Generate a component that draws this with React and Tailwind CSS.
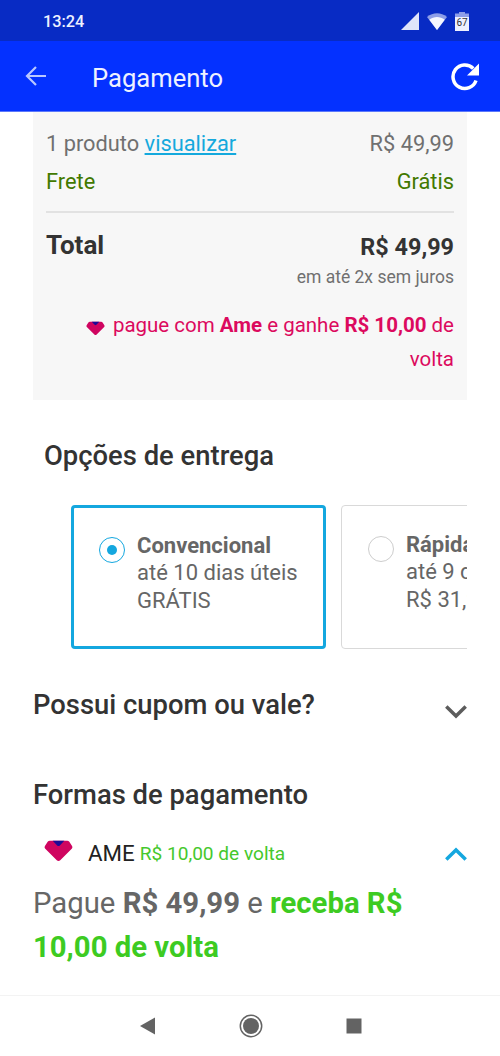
import { useState } from 'react'

const entregas = [
  { nome: "Convencional", prazo: "até 10 dias úteis", preco: "GRÁTIS" },
  { nome: "Rápida", prazo: "até 9 dias úteis", preco: "R$ 31,99" },
];

function AmeLogo({ className }) {
  return (
    <svg viewBox="0 0 30 22" className={className}>
      <path d="M6 0.5h18c1 0 1.600.3 2.200 1l2.800 4.300c.6 1 .5 2-.3 2.800L16.800 20.600c-1.100 1.100-2.500 1.100-3.600 0L1.300 8.600C.5 7.800.4 6.800 1 5.800L3.800 1.500C4.400.8 5 .5 6 .5z" fill="#cf0560" />
      <path d="M9 .5h12l-4.600 4.700c-.9.9-1.900.9-2.800 0z" fill="#1c0a96" />
    </svg>
  );
}

function StatusBar() {
  return (
    <div className="h-[41px] bg-[#082bc4] flex items-center justify-between pl-[43px] pr-[31px] pt-[2px]">
      <span className="text-[#eef1ff] text-[16.3px] font-medium leading-5">13:24</span>
      <div className="flex items-center gap-2">
        <svg viewBox="0 0 18 18" className="w-[18px] h-[18px] mt-[-2px]"><path d="M0 18L18 0v18z" fill="#dfe4fa" /></svg>
        <svg viewBox="0 0 20 17" className="w-5 h-[17px] mt-[-1px]">
          <path d="M0 4C6-1 14-1 20 4L10 17z" fill="#8d9ee8" />
          <path d="M2.300 6.800C7 3.200 13 3.200 17.700 6.800L10 17z" fill="#f5f7ff" />
        </svg>
        <svg viewBox="0 0 14 19" className="w-[14px] h-[19px]">
          <path d="M4 0h6v1.500h4v4H0v-4h4z" fill="#8d9ee8" />
          <path d="M0 5h14v14H0z" fill="#eef1ff" />
          <text x="7" y="13.500" textAnchor="middle" fontSize="10" fill="#333">67</text>
        </svg>
      </div>
    </div>
  );
}

function Header() {
  return (
    <header className="h-[71px] bg-[#0431ff] border-b border-[#5c78fb] flex items-center pl-[25px] pr-[21px]">
      <svg viewBox="0 0 22 20" className="w-[22px] h-5" fill="none" stroke="#b9c7ff" strokeWidth="2.200">
        <path d="M21 10H2.500M11 1L2 10l9 9" />
      </svg>
      <h1 className="ml-[45px] pt-1 flex-1 text-[25.600px] text-[#eef1ff]">Pagamento</h1>
      <svg viewBox="0 0 28 28" className="w-7 h-7 mt-px">
        <path d="M25 17.500A11.800 11.800 0 1 1 22.300 5.500" fill="none" stroke="#fff" strokeWidth="3.500" />
        <path d="M28 .5V12.500H16z" fill="#fff" />
      </svg>
    </header>
  );
}

function Resumo() {
  return (
    <section className="bg-[#f7f7f7] px-[13px] pt-[13px] pb-6 h-[288px]">
      <div className="flex justify-between text-[21.800px] leading-[38px] text-[#707070]">
        <span>1 produto <a className="text-[#15a9dd] underline decoration-2 underline-offset-2">visualizar</a></span>
        <span>R$ 49,99</span>
      </div>
      <div className="flex justify-between text-[21.800px] leading-[38px] text-[#427900]">
        <span>Frete</span>
        <span>Grátis</span>
      </div>
      <div className="mt-[10px] border-t-2 border-[#e2e2e2] pt-[16px] flex justify-between font-bold text-[#333]">
        <span className="text-[26px] leading-8">Total</span>
        <span className="text-[23.400px] leading-9">R$ 49,99</span>
      </div>
      <p className="text-right text-[17.500px] leading-6 text-[#707070]">em até 2x sem juros</p>
      <p className="mt-[19px] text-right text-[20.500px] leading-[34px] text-[#dc0a5e]">
        <AmeLogo className="inline w-[19px] h-[15px] mr-2 mt-1" />
        pague com <b>Ame</b> e ganhe <b>R$ 10,00</b> de volta
      </p>
    </section>
  );
}

function Entrega({ opcao, ativa, onClick }) {
  return (
    <button
      onClick={onClick}
      className={`shrink-0 w-[255px] h-36 flex items-start text-left rounded ${ativa ? "border-3 border-[#14a7df] pl-[25px] pt-6" : "border-[1.5px] border-[#d9d9d9] pl-[26px] pt-[25px]"}`}
    >
      <span className={`mt-[5px] mr-3 size-[26px] shrink-0 rounded-full flex items-center justify-center ${ativa ? "border-[1.5px] border-[#14a7df]" : "border-[1.5px] border-[#cdcdcd]"}`}>
        {ativa && <span className="size-[10px] rounded-full bg-[#14a7df]" />}
      </span>
      <span className="text-[22px] leading-[27.300px] text-[#666] whitespace-nowrap">
        <b className="block">{opcao.nome}</b>
        <span className="block">{opcao.prazo}</span>
        <span className="block">{opcao.preco}</span>
      </span>
    </button>
  );
}

export default function App() {
  const [entrega, setEntrega] = useState(0);
  const [ameAberto, setAmeAberto] = useState(true);

  return (
    <div className="h-[1056px] w-[500px] flex flex-col bg-white font-[Roboto,sans-serif] overflow-hidden">
      <StatusBar />
      <Header />

      <main className="flex-1 px-[33px] overflow-hidden">
        <Resumo />

        <h2 className="mt-[39px] pl-[11px] text-[27.400px] leading-[34px] font-medium text-[#333]">Opções de entrega</h2>
        <div className="mt-8 pl-[38px] flex gap-[15px] overflow-hidden">
          {entregas.map((e, i) => (
            <Entrega key={e.nome} opcao={e} ativa={i === entrega} onClick={() => setEntrega(i)} />
          ))}
        </div>

        <div className="mt-[39px] flex items-center justify-between">
          <h2 className="text-[27.400px] leading-[34px] font-medium text-[#333]">Possui cupom ou vale?</h2>
          <svg viewBox="0 0 22 14" className="w-[22px] h-[14px] mt-[13px]" fill="none" stroke="#5c5c5c" strokeWidth="3.500">
            <path d="M1.300 1.500L11 11l9.700-9.500" />
          </svg>
        </div>

        <h2 className="mt-14 text-[27.400px] leading-[34px] font-medium text-[#333]">Formas de pagamento</h2>
        <div className="mt-6 pl-[11px] h-9 flex items-center" onClick={() => setAmeAberto(!ameAberto)}>
          <AmeLogo className="w-[29px] h-[22px] mb-[7px]" />
          <span className="ml-[15px] text-[22.300px] text-[#222]">AME</span>
          <span className="ml-[5px] flex-1 text-[19.100px] text-[#45c82c]">R$ 10,00 de volta</span>
          <svg viewBox="0 0 22 14" className="w-[22px] h-[14px]" fill="none" stroke="#14a7df" strokeWidth="3.500">
            <path d="M1.300 12.500L11 3l9.700 9.500" />
          </svg>
        </div>
        {ameAberto && (
          <p className="mt-[9px] text-[29.300px] leading-[44px] text-[#666]">
            Pague <b>R$ 49,99</b> e <b className="text-[#3dcb22]">receba R$ 10,00 de volta</b>
          </p>
        )}
      </main>

      <nav className="h-[61px] border-t border-[#f3f3f3] flex items-center justify-center gap-[83px]">
        <svg viewBox="0 0 16 18" className="w-4 h-[18px] ml-px"><path d="M0 9L15 .5v17z" fill="#636363" /></svg>
        <svg viewBox="0 0 24 24" className="size-6">
          <circle cx="12" cy="12" r="10.700" fill="none" stroke="#636363" strokeWidth="1.500" />
          <circle cx="12" cy="12" r="8" fill="#636363" />
        </svg>
        <svg viewBox="0 0 16 16" className="size-4"><path d="M.5.5h15v15H.5z" fill="#636363" /></svg>
      </nav>
    </div>
  );
}
